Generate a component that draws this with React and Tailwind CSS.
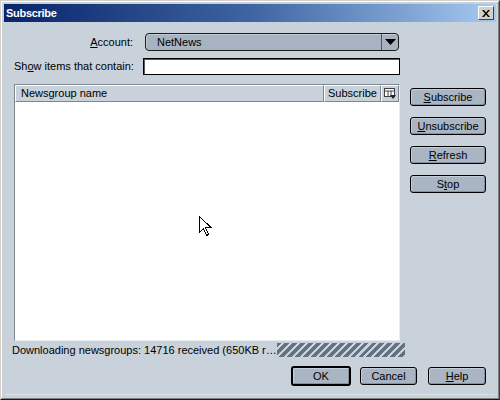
export default function App() {
  const btn =
    "h-[18px] flex items-center justify-center rounded-[3px] border border-black bg-[#a9b5c3] shadow-[inset_1px_1px_0_#c4ced9,inset_-1px_-1px_0_#8591a0]";
  const u = "underline underline-offset-1";
  return (
    <div className="w-[500px] h-[400px] bg-[#c9d1da] font-['Liberation_Sans',Arial,sans-serif] text-[11px] leading-none text-black border border-t-[#d4d0c8] border-l-[#d4d0c8] border-r-[#404040] border-b-[#1a1a1a]">
      <div className="h-full border border-t-white border-l-white border-r-[#808080] border-b-[#808080] p-[2px] flex flex-col">
        {/* Title bar */}
        <div className="h-[18px] shrink-0 flex items-center justify-between pl-[2px] pr-[2px] bg-linear-to-r from-[#0a246a] via-[#3f64a2] to-[#a6caf0]">
          <span className="text-white font-bold text-[11px] tracking-[-0.3px]">Subscribe</span>
          <div className="w-[16px] h-[14px] bg-[#d4d0c8] border border-t-white border-l-white border-r-[#404040] border-b-[#404040] flex items-center justify-center">
            <svg width="8" height="7" viewBox="0 0 8 7">
              <path d="M0 0h2l2 2.5L6 0h2L5 3.5 8 7H6L4 4.5 2 7H0l3-3.5z" fill="black" />
            </svg>
          </div>
        </div>

        <div className="flex flex-col px-[10px]">
          {/* Account row */}
          <div className="mt-[11px] h-[18px] flex items-center">
            <div className="w-[119px] text-right">
              <span className={u}>A</span>ccount:
            </div>
            <div className="ml-[12px] w-[254px] h-[18px] flex rounded-[4px] border border-[#1c1c1c] bg-[#a7b3c1] shadow-[inset_1px_1px_0_#c3ccd6]">
              <div className="flex-1 flex items-center pl-[11px]">NetNews</div>
              <div className="w-[17px] border-l border-[#4c5562] flex items-center justify-center">
                <svg width="11" height="6" viewBox="0 0 11 6">
                  <path d="M0 0h11L5.5 6z" fill="black" />
                </svg>
              </div>
            </div>
          </div>

          {/* Show items row */}
          <div className="mt-[7px] h-[17px] flex items-center">
            <div className="w-[129px]">
              Sh<span className={u}>o</span>w items that contain:
            </div>
            <div className="w-[257px] h-[17px] bg-white border border-black shadow-[inset_1px_1px_0_#5a5a5a]"></div>
          </div>

          {/* List + side buttons */}
          <div className="mt-[9px] flex">
            <div className="relative w-[386px] h-[257px] bg-white border border-t-[#7d8794] border-l-[#7d8794] border-r-[#e8edf2] border-b-[#e8edf2] flex flex-col">
              <div className="h-[17px] flex bg-[#c9d1da]">
                <div className="flex-1 flex items-center pl-[5px] border border-t-white border-l-white border-r-[#7d8794] border-b-[#7d8794]">
                  Newsgroup name
                </div>
                <div className="w-[57px] flex items-center pl-[3px] whitespace-nowrap border border-t-white border-l-white border-r-[#7d8794] border-b-[#7d8794]">
                  Subscribe
                </div>
                <div className="w-[18px] flex items-center justify-center border border-t-white border-l-white border-r-[#7d8794] border-b-[#7d8794]">
                  <svg width="12" height="11" viewBox="0 0 12 11">
                    <rect x="0.5" y="0.5" width="10" height="8" fill="white" stroke="#404040" />
                    <path d="M1 3h9" stroke="#404040" />
                    <path d="M4 3v6M7 3v6" stroke="#404040" />
                    <path d="M6 7h6l-3 4z" fill="#202020" />
                  </svg>
                </div>
              </div>
              <div className="flex-1 bg-white"></div>
              <svg className="absolute left-[184px] top-[131px]" width="13" height="21" viewBox="0 0 13 21">
                <path
                  d="M0.5 0.5v16l4-4 3 7 2-1-3-7h5.5z"
                  fill="white"
                  stroke="black"
                  strokeWidth="1"
                  shapeRendering="crispEdges"
                />
              </svg>
            </div>

            <div className="ml-[10px] w-[76px] pt-[4px] flex flex-col gap-[11px]">
              <div className={btn}>
                <span className={u}>S</span>ubscribe
              </div>
              <div className={btn}>
                <span className={u}>U</span>nsubscribe
              </div>
              <div className={btn}>
                <span className={u}>R</span>efresh
              </div>
              <div className={btn}>
                S<span className={u}>t</span>op
              </div>
            </div>
          </div>

          {/* Status row */}
          <div className="mt-[2px] h-[14px] flex items-center">
            <div className="ml-[-2px] w-[265px] whitespace-nowrap overflow-hidden">
              Downloading newsgroups: 14716 received (650KB r…
            </div>
            <div className="w-[128px] h-[14px] bg-[repeating-linear-gradient(135deg,#627282_0_3.4px,#c9d1da_3.4px_5.6px)]"></div>
          </div>

          {/* Bottom buttons */}
          <div className="mt-[9px] flex items-center justify-end">
            <div className="w-[60px] h-[20px] flex items-center justify-center rounded-[3px] border-2 border-black bg-[#a9b5c3] shadow-[inset_1px_1px_0_#c4ced9,inset_-1px_-1px_0_#8591a0]">
              OK
            </div>
            <div className={`${btn} ml-[9px] w-[57px]`}>Cancel</div>
            <div className={`${btn} ml-[11px] w-[58px]`}>
              <span className={u}>H</span>elp
            </div>
          </div>
        </div>
        <div className="flex-1"></div>
        <div className="h-[1px] mb-[1px] mx-[2px] border-b border-dotted border-[#e6ebf0]"></div>
      </div>
    </div>
  );
}
